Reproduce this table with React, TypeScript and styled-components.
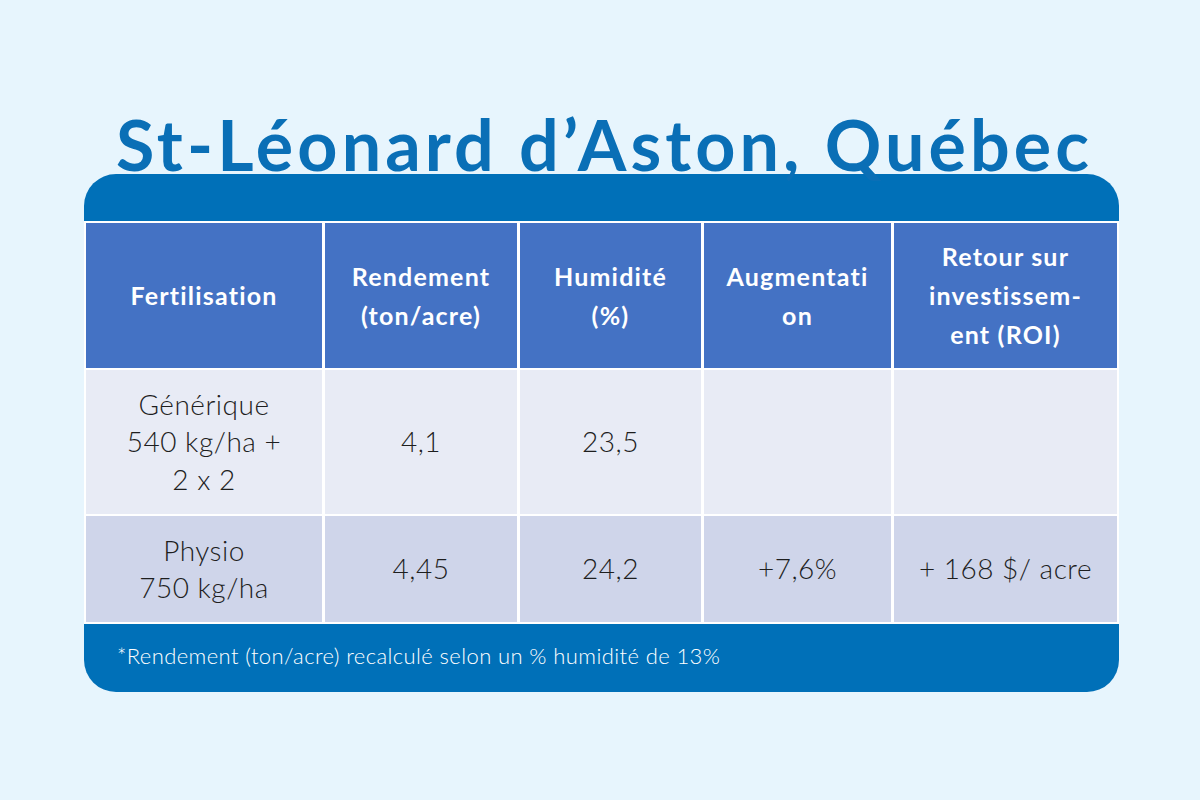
import React from "react";
import styled, { createGlobalStyle } from "styled-components";

const Global = createGlobalStyle`
  html, body { margin: 0; padding: 0; background: #e7f5fd; }
  body { font-family: "Lato", "Liberation Sans", sans-serif; }
`;

const Page = styled.div`
  width: 1200px;
  height: 800px;
  box-sizing: border-box;
  padding-top: 109px;
  padding-left: 3px;
  display: flex;
  flex-direction: column;
  align-items: center;
  background: #e7f5fd;
`;

const Title = styled.h1`
  position: relative;
  z-index: 1;
  margin: 0 0 -5px 6px;
  font-family: "Lato", sans-serif;
  font-weight: 700;
  font-size: 70px;
  letter-spacing: 4.1px;
  line-height: 1;
  color: #0a6fb6;
  white-space: nowrap;
`;

const Card = styled.div`
  width: 1035px;
  background: #ffffff;
  border-radius: 32px;
  overflow: hidden;
  display: flex;
  flex-direction: column;
`;

const Band = styled.div<{ $h: number }>`
  height: ${(p) => p.$h}px;
  background: #0070b8;
  display: flex;
  align-items: center;
  padding-left: 33px;
  box-sizing: border-box;
  color: #ffffff;
  font-weight: 300;
  font-size: 22px;
  letter-spacing: 0.4px;
  padding-bottom: 6px;
`;

const Grid = styled.div`
  display: grid;
  grid-template-columns: 236px 192px 181px 187px 223px;
  grid-template-rows: 145px 144px 106px;
  column-gap: 3px;
  row-gap: 2px;
  padding: 2px;
`;

const Cell = styled.div<{ $kind: "head" | "odd" | "even" }>`
  display: flex;
  align-items: center;
  justify-content: center;
  text-align: center;
  background: ${(p) =>
    p.$kind === "head" ? "#4472c4" : p.$kind === "odd" ? "#e8ebf5" : "#cfd5ea"};
  color: ${(p) => (p.$kind === "head" ? "#ffffff" : "#1e1e1e")};
  font-weight: ${(p) => (p.$kind === "head" ? 700 : 300)};
  font-size: ${(p) => (p.$kind === "head" ? "25px" : "28px")};
  letter-spacing: ${(p) => (p.$kind === "head" ? "1.2px" : "0.5px")};
  line-height: ${(p) => (p.$kind === "head" ? "39px" : "37.5px")};
`;

const heads: React.ReactNode[] = [
  "Fertilisation",
  <>Rendement<br />(ton/acre)</>,
  <>Humidité<br />(%)</>,
  <>Augmentati<br />on</>,
  <>Retour sur<br />investissem-<br />ent (ROI)</>,
];

const rows: { kind: "odd" | "even"; cells: React.ReactNode[] }[] = [
  {
    kind: "odd",
    cells: [<>Générique<br />540 kg/ha +<br />2 x 2</>, "4,1", "23,5", "", ""],
  },
  {
    kind: "even",
    cells: [<>Physio<br />750 kg/ha</>, "4,45", "24,2", "+7,6%", "+ 168 $/ acre"],
  },
];

export default function App() {
  return (
    <>
      <Global />
      <Page>
        <Title>St-Léonard d’Aston, Québec</Title>
        <Card>
          <Band $h={47} />
          <Grid>
            {heads.map((h, i) => (
              <Cell key={`h${i}`} $kind="head">
                <div>{h}</div>
              </Cell>
            ))}
            {rows.map((r, ri) =>
              r.cells.map((c, ci) => (
                <Cell key={`r${ri}c${ci}`} $kind={r.kind}>
                  <div>{c}</div>
                </Cell>
              ))
            )}
          </Grid>
          <Band $h={68}>*Rendement (ton/acre) recalculé selon un % humidité de 13%</Band>
        </Card>
      </Page>
    </>
  );
}
